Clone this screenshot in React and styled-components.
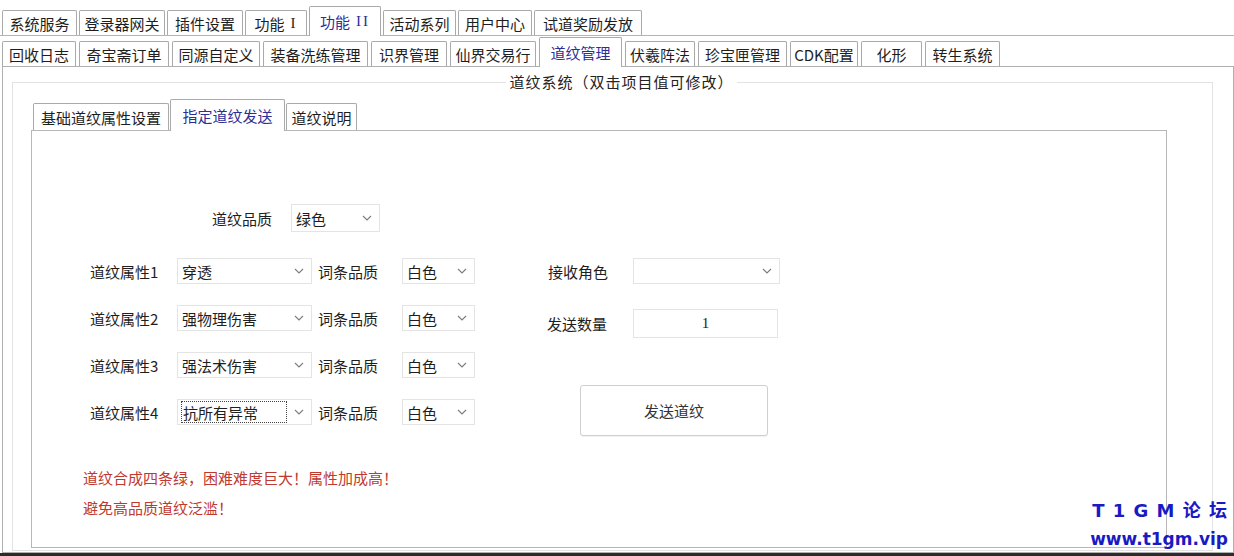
import React from "react";
import styled, { createGlobalStyle } from "styled-components";

const GlobalStyle = createGlobalStyle`
  html, body {
    margin: 0;
    padding: 0;
    background: #fff;
  }
  body {
    font-family: "Noto Sans CJK SC", "Noto Sans", sans-serif;
    font-size: 15px;
    color: #1e1e1e;
  }
  * {
    box-sizing: border-box;
  }
`;

const Screen = styled.div`
  position: relative;
  width: 1234px;
  height: 556px;
  overflow: hidden;
  background: #fff;
  display: flex;
  flex-direction: column;
`;

const TabStrip = styled.div`
  display: flex;
  align-items: flex-end;
  gap: ${(p) => p.$gap}px;
  height: ${(p) => p.$height}px;
  padding-left: ${(p) => p.$indent}px;
  border-bottom: ${(p) => (p.$line ? "1px solid #b4b4b4" : "none")};
  flex-shrink: 0;
`;

const Tab = styled.div`
  position: relative;
  z-index: ${(p) => (p.$active ? 2 : 1)};
  width: ${(p) => p.$w}px;
  height: ${(p) => (p.$active ? p.$h + 5 : p.$h)}px;
  margin-bottom: ${(p) => (p.$active ? -1 : 0)}px;
  display: flex;
  align-items: center;
  justify-content: center;
  padding-top: ${(p) => (p.$active ? 0 : 1)}px;
  border: 1px solid #a9a9a9;
  border-bottom: none;
  border-radius: 2px 2px 0 0;
  background: #fff;
  color: ${(p) => (p.$active ? "#2e2e98" : "#1e1e1e")};
  font-size: 15px;
  line-height: 1;
  white-space: nowrap;
`;

const Numeral = styled.span`
  font-family: "Liberation Serif", serif;
  margin-left: 6px;
  letter-spacing: 2px;
`;

const Panel = styled.div`
  margin-left: 2px;
  width: 1232px;
  height: 487px;
  border: 1px solid #afafaf;
  flex-shrink: 0;
`;

const BottomRule = styled.div`
  height: 3px;
  background: #2b2b2b;
  flex-shrink: 0;
`;

const GroupBox = styled.fieldset`
  margin: 5px 0 0 9px;
  width: 1201px;
  height: 479px;
  padding: 9px 0 0 18px;
  border: 1px solid #e3e3e3;
  min-inline-size: 0;
`;

const Legend = styled.legend`
  margin: 0 auto;
  padding: 0 3px;
  font-size: 15px;
  letter-spacing: 1px;
  line-height: 20px;
  color: #222;
`;

const InnerPanel = styled.div`
  width: 1136px;
  height: 418px;
  border: 1px solid #b7b7b7;
  padding-top: 73px;
  background: #fff;
`;

const QualityRow = styled.div`
  display: flex;
  align-items: center;
  height: 28px;
  padding-left: 178px;
  gap: 19px;
`;

const Label = styled.div`
  width: ${(p) => p.$w || "auto"};
  text-align: ${(p) => p.$align || "left"};
  padding-left: ${(p) => p.$pad || 0}px;
  font-size: 15px;
  line-height: 1;
  color: #1e1e1e;
  white-space: nowrap;
  align-self: center;
`;

const SelectBox = styled.div`
  width: ${(p) => p.$w}px;
  height: ${(p) => p.$h || 26}px;
  display: flex;
  align-items: center;
  justify-content: space-between;
  padding: 0 7px 0 4px;
  border: 1px solid #e4e4e4;
  background: #fff;
  font-size: 15px;
  color: #1e1e1e;
`;

const SelectText = styled.span`
  line-height: 1;
  padding: ${(p) => (p.$focused ? "3px 0 2px 1px" : "0")};
  margin-left: ${(p) => (p.$focused ? -1 : 0)}px;
  width: ${(p) => (p.$focused ? "106px" : "auto")};
  border: ${(p) => (p.$focused ? "1px dotted #444" : "none")};
`;

const Chevron = () => (
  <svg width="10" height="6" viewBox="0 0 10 6">
    <path d="M1 1 L5 5 L9 1" fill="none" stroke="#7c7c7c" strokeWidth="1.1" />
  </svg>
);

const Select = ({ w, h, value, focused }) => (
  <SelectBox $w={w} $h={h}>
    <SelectText $focused={focused}>{value}</SelectText>
    <Chevron />
  </SelectBox>
);

const FormArea = styled.div`
  display: flex;
  align-items: flex-start;
  margin-top: 26px;
  padding-left: 57px;
`;

const AttrGrid = styled.div`
  display: grid;
  grid-template-columns: 88px 135px 90px 73px;
  grid-auto-rows: 26px;
  row-gap: 21px;
`;

const SideColumn = styled.div`
  margin-left: 72px;
  display: flex;
  flex-direction: column;
`;

const SideGrid = styled.div`
  display: grid;
  grid-template-columns: 86px 147px;
  grid-template-rows: 26px 29px;
  row-gap: 25px;
`;

const NumberField = styled.div`
  width: 145px;
  height: 29px;
  border: 1px solid #e4e4e4;
  display: flex;
  align-items: center;
  justify-content: center;
  font-family: "Liberation Serif", serif;
  font-size: 15px;
  color: #1e1e1e;
`;

const SendButton = styled.div`
  margin: 47px 0 0 33px;
  width: 188px;
  height: 51px;
  display: flex;
  align-items: center;
  justify-content: center;
  border: 1px solid #cfcfcf;
  border-radius: 3px;
  background: #fff;
  box-shadow: 0 1px 1px rgba(0, 0, 0, 0.06);
  font-size: 15px;
  color: #333;
`;

const Notes = styled.div`
  margin-top: 27px;
  padding-left: 51px;
  color: #c0392f;
  font-size: 15px;
  line-height: 30px;
`;

const Watermark = styled.div`
  position: absolute;
  right: 6px;
  bottom: 3px;
  text-align: right;
  color: #1a1ac4;
  font-family: "DejaVu Sans", "Noto Sans CJK SC", sans-serif;
  font-weight: 700;
  font-size: 17px;
  line-height: 28px;
`;

const WatermarkTitle = styled.div`
  font-size: 18px;
  letter-spacing: 1px;
`;

const topTabs = [
  ["系统服务", 75],
  ["登录器网关", 86],
  ["插件设置", 76],
  ["功能", 62, false, "I"],
  ["功能", 72, true, "II"],
  ["活动系列", 73],
  ["用户中心", 74],
  ["试道奖励发放", 108],
];

const subTabs = [
  ["回收日志", 74],
  ["奇宝斋订单", 90],
  ["同源自定义", 88],
  ["装备洗练管理", 105],
  ["识界管理", 76],
  ["仙界交易行", 86],
  ["道纹管理", 83, true],
  ["伏羲阵法", 70],
  ["珍宝匣管理", 89],
  ["CDK配置", 68],
  ["化形", 61],
  ["转生系统", 75],
];

const innerTabs = [
  ["基础道纹属性设置", 136],
  ["指定道纹发送", 115, true],
  ["道纹说明", 71],
];

const attrs = [
  ["道纹属性1", "穿透"],
  ["道纹属性2", "强物理伤害"],
  ["道纹属性3", "强法术伤害"],
  ["道纹属性4", "抗所有异常", true],
];

const App = () => {
  return (
    <>
      <GlobalStyle />
      <Screen>
        <TabStrip $height={36} $indent={2} $gap={2} $line>
          {topTabs.map(([label, w, active, num]) => (
            <Tab key={label + (num || "")} $w={w} $h={25} $active={active}>
              {label}
              {num && <Numeral>{num}</Numeral>}
            </Tab>
          ))}
        </TabStrip>
        <TabStrip $height={30} $indent={2} $gap={3}>
          {subTabs.map(([label, w, active]) => (
            <Tab key={label} $w={w} $h={25} $active={active}>
              {label}
            </Tab>
          ))}
        </TabStrip>
        <Panel>
          <GroupBox>
            <Legend>道纹系统（双击项目值可修改）</Legend>
            <TabStrip $height={29} $indent={2} $gap={1}>
              {innerTabs.map(([label, w, active]) => (
                <Tab key={label} $w={w} $h={27} $active={active}>
                  {label}
                </Tab>
              ))}
            </TabStrip>
            <InnerPanel>
              <QualityRow>
                <Label $w="62px" $align="right">道纹品质</Label>
                <Select w={89} h={28} value="绿色" />
              </QualityRow>
              <FormArea>
                <AttrGrid>
                  {attrs.map(([label, value, focused]) => (
                    <React.Fragment key={label}>
                      <Label $pad={1}>{label}</Label>
                      <Select w={135} value={value} focused={focused} />
                      <Label $pad={6}>词条品质</Label>
                      <Select w={73} value="白色" />
                    </React.Fragment>
                  ))}
                </AttrGrid>
                <SideColumn>
                  <SideGrid>
                    <Label $pad={1}>接收角色</Label>
                    <Select w={147} value="" />
                    <Label>发送数量</Label>
                    <NumberField>1</NumberField>
                  </SideGrid>
                  <SendButton>发送道纹</SendButton>
                </SideColumn>
              </FormArea>
              <Notes>
                <div>道纹合成四条绿，困难难度巨大！属性加成高！</div>
                <div>避免高品质道纹泛滥！</div>
              </Notes>
            </InnerPanel>
          </GroupBox>
        </Panel>
        <BottomRule />
        <Watermark>
          <WatermarkTitle>T 1 G M 论 坛</WatermarkTitle>
          <div>www.t1gm.vip</div>
        </Watermark>
      </Screen>
    </>
  );
};

export default App;
